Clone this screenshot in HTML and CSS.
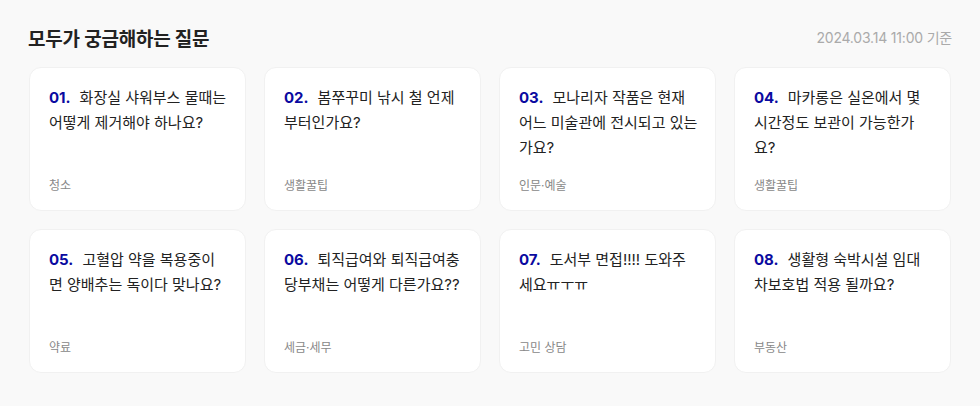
FILE: index.html
```html
<!DOCTYPE html>
<html lang="ko">
<head>
<meta charset="utf-8">
<title>모두가 궁금해하는 질문</title>
<link rel="stylesheet" href="styles.css">
</head>
<body>
<section class="faq">
  <header class="faq-head">
    <h2 class="faq-title">모두가 궁금해하는 질문</h2>
    <span class="faq-date">2024.03.14 11:00 기준</span>
  </header>
  <ul class="faq-grid">
    <li class="card"><p class="q"><span class="num">01.</span>화장실 샤워부스 물때는 어떻게 제거해야 하나요?</p><span class="cat">청소</span></li>
    <li class="card"><p class="q"><span class="num">02.</span>봄쭈꾸미 낚시 철 언제부터인가요?</p><span class="cat">생활꿀팁</span></li>
    <li class="card"><p class="q"><span class="num">03.</span>모나리자 작품은 현재 어느 미술관에 전시되고 있는가요?</p><span class="cat">인문·예술</span></li>
    <li class="card"><p class="q"><span class="num">04.</span>마카롱은 실온에서 몇 시간정도 보관이 가능한가요?</p><span class="cat">생활꿀팁</span></li>
    <li class="card"><p class="q"><span class="num">05.</span>고혈압 약을 복용중이면 양배추는 독이다 맞나요?</p><span class="cat">약료</span></li>
    <li class="card"><p class="q"><span class="num">06.</span>퇴직급여와 퇴직급여충당부채는 어떻게 다른가요??</p><span class="cat">세금·세무</span></li>
    <li class="card"><p class="q"><span class="num">07.</span>도서부 면접!!!! 도와주세요ㅠㅜㅠ</p><span class="cat">고민 상담</span></li>
    <li class="card"><p class="q"><span class="num">08.</span>생활형 숙박시설 임대차보호법 적용 될까요?</p><span class="cat">부동산</span></li>
  </ul>
</section>
</body>
</html>
```

FILE: styles.css
```css
* { box-sizing: border-box; }
html, body { margin: 0; padding: 0; }
body {
  background: #f9f9f9;
  font-family: Inter, "Noto Sans CJK KR", sans-serif;
  color: #222;
}
.faq {
  padding: 24px 28px 0 29px;
}
.faq-head {
  display: flex;
  justify-content: space-between;
  align-items: center;
  height: 26px;
  margin-bottom: 17px;
}
.faq-title {
  margin: 0 0 0 -1px;
  font-size: 19px;
  font-weight: 700;
  color: #222;
  letter-spacing: -0.2px;
}
.faq-date {
  font-size: 14px;
  color: #aaaaaa;
  letter-spacing: -0.2px;
}
.faq-grid {
  list-style: none;
  margin: 0;
  padding: 0;
  display: grid;
  grid-template-columns: repeat(4, 217px);
  column-gap: 18px;
  row-gap: 18px;
}
.card {
  height: 144px;
  background: #fff;
  border: 1px solid #f1f1f1;
  border-radius: 12px;
  padding: 17px 17px 15px 19px;
  display: flex;
  flex-direction: column;
  justify-content: space-between;
}
.q {
  margin: 0;
  font-size: 15px;
  line-height: 25px;
  color: #222;
}
.num {
  font-weight: 700;
  color: #0a0aa0;
  margin-right: 9px;
}
.cat {
  font-size: 12px;
  line-height: 18px;
  color: #888;
}
```
